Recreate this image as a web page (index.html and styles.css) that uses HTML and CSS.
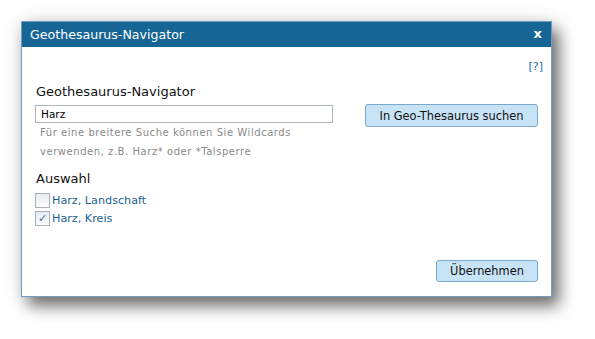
FILE: index.html
```html
<!DOCTYPE html>
<html lang="de">
<head>
    <meta charset="UTF-8">
    <title>Geothesaurus-Navigator</title>
    <link rel="stylesheet" href="styles.css">
</head>
<body>
<div class="dialog">
    <div class="titlebar">
        <span class="title">Geothesaurus-Navigator</span>
        <span class="close">x</span>
    </div>
    <div class="content">
        <div class="help"><a href="#">[?]</a></div>
        <h2>Geothesaurus-Navigator</h2>
        <div class="search-row">
            <div class="search-col">
                <input type="text" class="search" value="Harz">
                <p class="hint">Für eine breitere Suche können Sie Wildcards verwenden, z.B. Harz* oder *Talsperre</p>
            </div>
            <button class="btn btn-search">In Geo-Thesaurus suchen</button>
        </div>
        <h2 class="choice">Auswahl</h2>
        <label class="option"><span class="box"></span>Harz, Landschaft</label>
        <label class="option"><span class="box checked">&#10003;</span>Harz, Kreis</label>
        <div class="footer">
            <button class="btn">Übernehmen</button>
        </div>
    </div>
</div>
</body>
</html>
```

FILE: styles.css
```css
html, body {
  height: 100%;
}
body {
  font-family: 'DejaVu Sans', Verdana, sans-serif;
  background-color: #fff;
  margin: 0;
  padding: 21px 0 0 21px;
  box-sizing: border-box;
  min-height: 339px;
}
.dialog {
  width: 529px;
  height: 274px;
  border: 1px solid #6f9dc4;
  background-color: #fff;
  box-shadow: 7px 9px 15px rgba(0, 0, 0, 0.55), 0 0 18px rgba(0, 0, 0, 0.12);
}
.titlebar {
  background-color: #176594;
  color: #fff;
  height: 25px;
  display: flex;
  align-items: center;
  justify-content: space-between;
  padding: 0 9px 0 8px;
}
.title {
  font-size: 12.6px;
}
.close {
  font-weight: bold;
  font-size: 13px;
  line-height: 1;
  margin-top: -2px;
}
.content {
  padding: 13px 8px 0 13px;
}
.help {
  text-align: right;
  font-size: 11px;
  height: 15px;
}
.help a {
  color: #1d6aa8;
  text-decoration: none;
}
h2 {
  font-size: 13px;
  font-weight: normal;
  color: #111;
  margin: 9px 0 6px 1px;
}
.search-row {
  display: flex;
  justify-content: space-between;
  align-items: flex-start;
}
.search-col {
  width: 298px;
}
.search {
  display: block;
  width: 100%;
  box-sizing: border-box;
  height: 18px;
  border: 1px solid #adb6c0;
  padding: 0 5px;
  font-family: inherit;
  font-size: 10.5px;
  color: #000;
  margin: 0;
}
.hint {
  font-size: 10px;
  color: #8a8a8a;
  line-height: 19px;
  margin: 0 0 0 5px;
  letter-spacing: 0.55px;
  max-width: 275px;
}
.btn {
  font-family: inherit;
  font-size: 11.4px;
  color: #111;
  background-color: #c7e3f6;
  border: 1px solid #7ea8ca;
  border-radius: 3px;
  height: 23px;
  padding: 0;
  cursor: pointer;
}
.btn-search {
  width: 173px;
  margin: -1px 5px 0 0;
}
h2.choice {
  margin-top: 10px;
  margin-bottom: 5px;
}
.option {
  display: flex;
  align-items: center;
  font-size: 11.2px;
  color: #1c5f92;
  height: 18px;
}
.box {
  width: 13px;
  height: 13px;
  border: 1px solid #a9b1ba;
  background: linear-gradient(#e6ecf2, #fbfcfd);
  margin-right: 2px;
  font-size: 11px;
  line-height: 13px;
  text-align: center;
  color: #3d6f9d;
}
.footer {
  display: flex;
  justify-content: flex-end;
  margin-top: 33px;
}
.footer .btn {
  width: 102px;
  height: 22px;
  margin-right: 5px;
}
```
